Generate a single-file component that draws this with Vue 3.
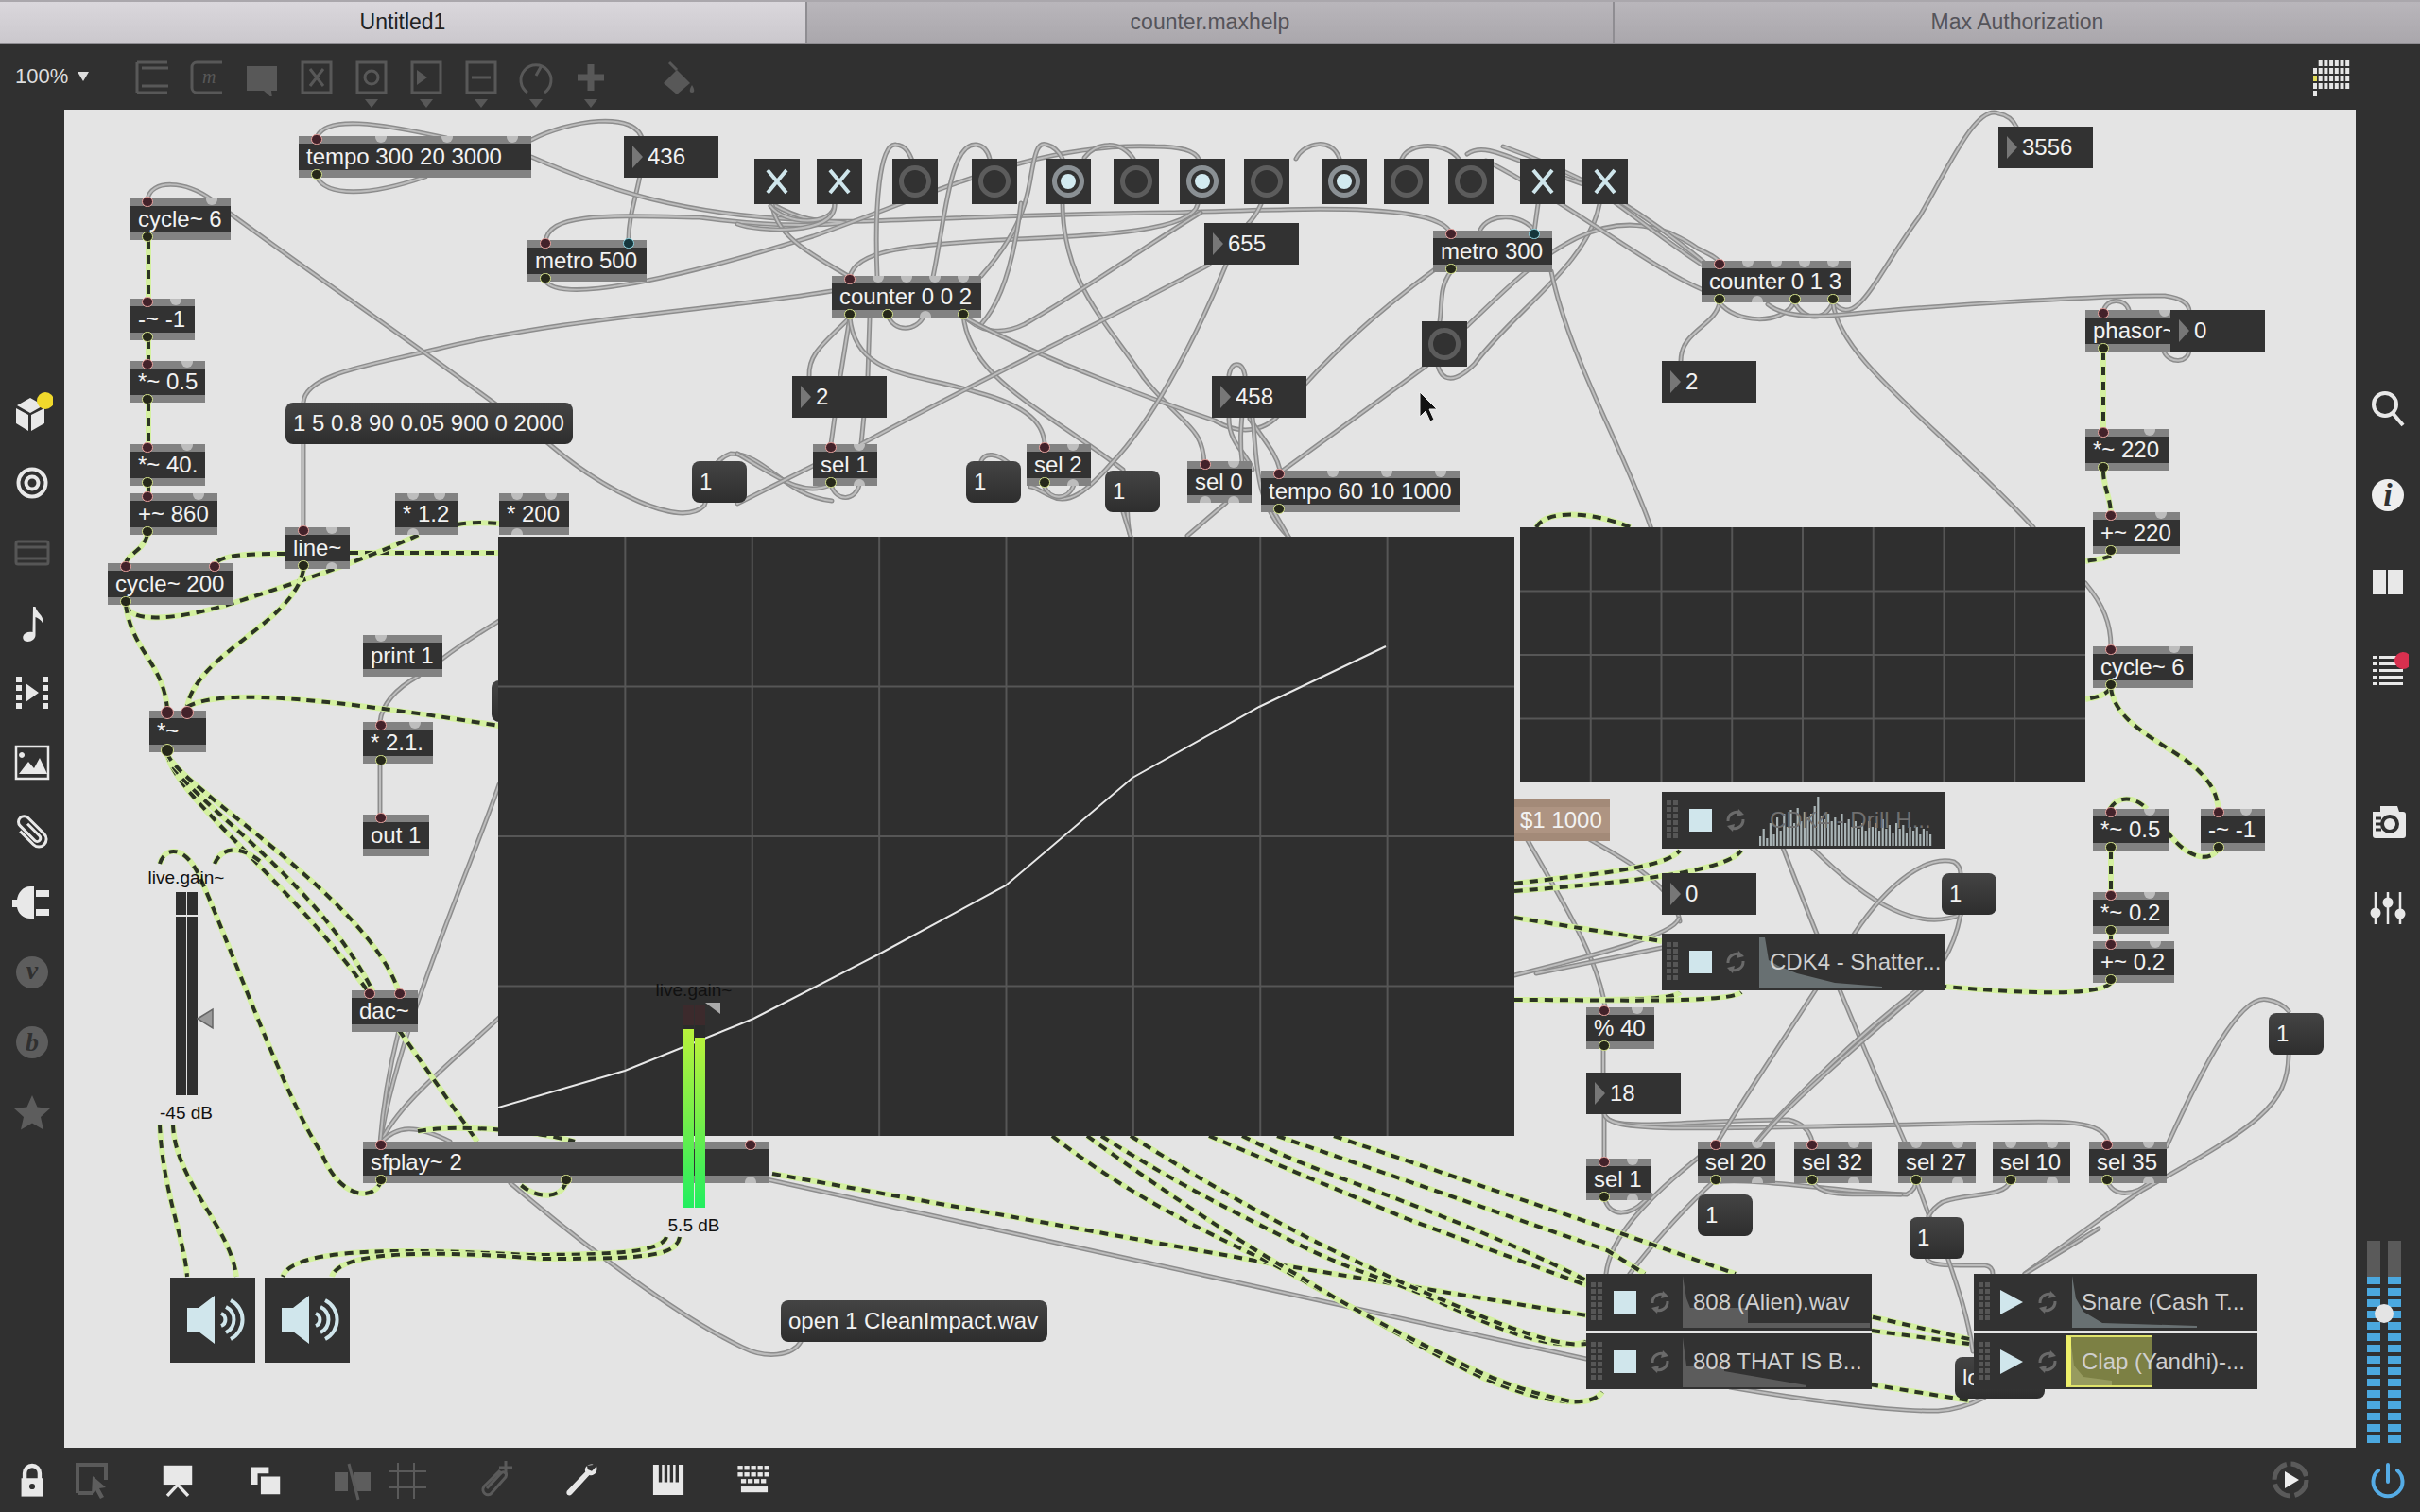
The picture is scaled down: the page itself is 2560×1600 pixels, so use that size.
<script setup>
const o = (t, x, y, w, i = '', u = '') => ({ t, x, y, w, i: ports(i), u: ports(u) })
function ports(s) {
  return s.split(' ').filter(Boolean).map(p => ({ x: parseInt(p), c: /c/.test(p), t: /t/.test(p), b: /b/.test(p) }))
}
const objs = [
  o('tempo 300 20 3000', 316, 144, 246, '19c 87 157 226', '19c'),
  o('cycle~ 6', 138, 210, 106, '18c 86', '18c'),
  o('-~ -1', 138, 316, 68, '18c 48', '18c'),
  o('*~ 0.5', 138, 382, 79, '18c 60', '18c'),
  o('*~ 40.', 138, 470, 79, '18c 60', '18c'),
  o('+~ 860', 138, 522, 92, '18c 72', '18c'),
  o('metro 500', 558, 254, 126, '19c 107ct', '19c'),
  o('* 1.2', 418, 522, 66, '19 47', '19'),
  o('* 200', 528, 522, 74, '19 55', '19'),
  o('cycle~ 200', 114, 596, 132, '19c 113c', '19c'),
  o('line~', 302, 558, 68, '19c 49', '19c 49'),
  o('print 1', 384, 672, 84, '19', ''),
  o('*~', 158, 752, 60, '19cb 40cb', '19cb'),
  o('* 2.1.', 384, 764, 74, '19c 55', '19c'),
  o('out 1', 384, 862, 70, '19c', ''),
  o('dac~', 372, 1048, 70, '19c 51c', ''),
  o('sfplay~ 2', 384, 1208, 430, '19c 410c', '19c 215c 410'),
  o('counter 0 0 2', 880, 292, 158, '19c 49 79 109 139', '19c 59c 99 139c'),
  o('metro 300', 1516, 244, 126, '19c 107ct', '19c'),
  o('sel 1', 860, 470, 68, '19c 49', '19c 49'),
  o('sel 2', 1086, 470, 68, '19c 49', '19c 49'),
  o('sel 0', 1256, 488, 68, '19c 49', '19 49'),
  o('tempo 60 10 1000', 1334, 498, 210, '19c 76 133 190', '19c'),
  o('counter 0 1 3', 1800, 276, 158, '19c 49 79 109 139', '19c 59 99c 139c'),
  o('phasor~', 2206, 328, 100, '19c 84', '19c'),
  o('*~ 220', 2206, 454, 88, '19c 68', '19c'),
  o('+~ 220', 2214, 542, 92, '19c 72', '19c'),
  o('cycle~ 6', 2214, 684, 106, '19c 86', '19c'),
  o('*~ 0.5', 2214, 856, 80, '19c 60', '19c'),
  o('-~ -1', 2328, 856, 68, '19c 48', '19c'),
  o('*~ 0.2', 2214, 944, 80, '19c 60', '19c'),
  o('+~ 0.2', 2214, 996, 86, '19c 66', '19c'),
  o('% 40', 1678, 1066, 72, '19c 54', '19c'),
  o('sel 1', 1678, 1226, 68, '19c 49', '19c 49'),
  o('sel 20', 1796, 1208, 82, '19c 63', '19c 63'),
  o('sel 32', 1898, 1208, 82, '19c 63', '19c 63'),
  o('sel 27', 2008, 1208, 82, '19 63', '19c 63'),
  o('sel 10', 2108, 1208, 82, '19 63', '19c 63'),
  o('sel 35', 2210, 1208, 82, '19c 63', '19c 63'),
]
const nums = [
  ['436', 660, 144], ['655', 1274, 236], ['2', 838, 398], ['458', 1282, 398], ['3556', 2114, 134],
  ['2', 1758, 382], ['0', 2296, 328], ['0', 1758, 924], ['18', 1678, 1135],
].map(([t, x, y]) => ({ t, x, y }))
const msgs = [
  ['1 5 0.8 90 0.05 900 0 2000', 302, 426, 304], ['1', 732, 488, 58], ['', 520, 720, 30], ['1', 1022, 488, 58],
  ['1', 1169, 498, 58], ['1', 2054, 924, 58], ['1', 1796, 1264, 58], ['1', 2020, 1288, 58], ['1', 2400, 1072, 58],
  ['open 1 CleanImpact.wav', 826, 1376, 282], ['lo', 2068, 1436, 95],
].map(([t, x, y, w]) => ({ t, x, y, w }))
const toggles = [798, 864, 1608, 1674].map(x => ({ x, y: 168 }))
const buttons = [
  [944], [1028], [1106, 1], [1178], [1248, 1], [1316], [1398, 1], [1464], [1532],
].map(([x, on]) => ({ x, y: 168, on })).concat([{ x: 1504, y: 340 }])

const gridLines = (x, y, w, h, cols, rows) => {
  const out = []
  for (let i = 1; i < cols; i++) out.push(`M${x + (w * i) / cols} ${y}V${y + h}`)
  for (let i = 1; i < rows; i++) out.push(`M${x} ${y + (h * i) / rows}H${x + w}`)
  return out.join('')
}
const grid1 = gridLines(0, 0, 1075, 634, 8, 4)
const grid2 = gridLines(0, 0, 598, 270, 8, 4)

const spikes = [10, 18, 8, 24, 12, 30, 16, 34, 20, 38, 24, 40, 26, 36, 30, 34, 42, 52, 32, 28, 34, 26, 30, 22, 34, 24, 28, 20, 26, 18, 24, 16, 26, 20, 24, 16, 28, 18, 22, 14, 24, 18, 22, 14, 20, 16, 20, 12, 18, 16, 12]
const drill = spikes.map((h, n) => `M${103 + n * 3.6} 57v-${h}h2.2v${h}Z`).join('')

const plays = [
  { t: 'CDK4 - Drill H...', x: 1758, y: 838, w: 300, h: 60, tx: 114, dim: true, wave: drill, c: '#a9b4b6' },
  { t: 'CDK4 - Shatter...', x: 1758, y: 988, w: 300, h: 60, tx: 114, wave: 'M103 57V4h6l4 24 10 6 20 8 40 10 50 4V57Z', c: '#687072' },
  { t: '808 (Alien).wav', x: 1678, y: 1348, w: 302, h: 60, tx: 113, wave: 'M102 57V2l4 24 4 10H171V52H300V57Z', c: '#5c5c5c' },
  { t: '808 THAT IS B...', x: 1678, y: 1411, w: 302, h: 59, tx: 113, wave: 'M102 57V4l4 30H146V40L233 55V57Z', c: '#5c5c5c' },
  { t: 'Snare (Cash T...', x: 2088, y: 1348, w: 300, h: 60, tx: 114, play: true, wave: 'M104 57V2l4 24 8 14 20 12 100 3V57Z', c: '#687072' },
  { t: 'Clap (Yandhi)-...', x: 2088, y: 1411, w: 300, h: 59, tx: 114, play: true, hl: true, wave: 'M102 57V4l4 30 10 12 30 4V57Z', c: '#636363' },
]
const dots = [0, 1, 2, 3, 4, 5]

const gray = [
  'M335 145C345 122 400 130 472 146', 'M335 187C345 208 390 208 450 187',
  'M562 148C600 128 675 115 680 150C682 190 664 220 665 256', 'M562 166C640 200 720 228 860 233C900 238 1000 228 1239 225C1400 220 1520 215 1535 247',
  'M577 256C580 225 640 228 740 230C800 238 850 240 895 236C880 232 860 240 817 216', 'M577 297C590 320 700 300 860 250C1000 200 1100 150 1222 155C1250 155 1264 160 1268 168',
  'M321 426C322 395 400 385 455 371C600 335 760 328 880 308', 'M156 211C160 190 195 190 225 212C300 270 450 370 581 470C640 520 720 560 745 535C752 520 745 490 773 480C810 480 830 525 880 530',
  'M817 216C820 250 860 270 899 293', 'M899 293C905 265 960 260 1040 255C1120 250 1260 250 1267 216', 'M883 216C882 240 830 238 815 218',
  'M883 216C885 250 800 245 780 237', 'M928 293C925 220 930 150 948 153C958 154 962 162 965 170', 'M987 293C1000 230 1005 150 1033 153C1040 154 1045 160 1047 168',
  'M1038 292C1075 250 1085 220 1090 190C1095 160 1098 150 1107 153C1115 155 1120 160 1124 168', 'M1038 343C1050 330 1070 300 1080 215', 'M1147 167C1160 150 1185 148 1199 168',
  'M1124 216C1125 300 1170 340 1210 400C1250 450 1272 450 1274 490', 'M899 336C870 365 855 375 856 398', 'M899 336L889 398L879 470', 'M920 336L918 398L911 470',
  'M899 336C905 400 970 395 1033 415C1090 430 1105 450 1105 472', 'M939 333C945 352 970 352 978 333', 'M1019 333C1025 400 1100 430 1188 497C1195 520 1190 550 1196 568',
  'M1019 333C1035 352 1060 355 1084 343C1150 305 1220 255 1270 225', 'M1019 335C1100 380 1240 430 1285 445C1310 460 1340 460 1360 430C1410 370 1470 320 1518 285',
  'M1279 280C1150 350 1033 403 911 470', 'M1297 280C1260 370 1215 450 1176 490C1150 520 1130 535 1112 525C1100 520 1095 515 1090 515',
  'M1535 287C1522 305 1526 320 1523 340', 'M1566 243C1575 225 1610 225 1624 245', 'M1627 216L1623 245', 'M1692 216C1680 280 1600 330 1560 385C1540 405 1526 405 1521 387',
  'M1552 345C1620 280 1700 195 1796 263C1810 270 1815 272 1819 277', 'M1354 500L1509 387', 'M1641 287C1660 380 1720 480 1747 560', 'M1590 155C1661 180 1720 210 1802 277',
  'M1572 170C1660 215 1740 280 1802 307', 'M1819 320C1815 345 1778 350 1778 382', 'M1819 320C1835 342 1885 345 1898 320', 'M1898 320C1910 340 1930 340 1939 320',
  'M1939 320C1965 350 1985 290 2030 230C2060 180 2090 110 2114 120C2125 122 2130 128 2133 134', 'M1939 320C1945 380 2050 450 2151 558',
  'M1870 322C1890 338 1930 335 1960 332C2060 322 2240 312 2290 313C2305 315 2316 320 2316 330', 'M2225 330C2228 315 2248 315 2252 328', 'M2289 372C2295 385 2315 385 2316 370',
  'M1300 443C1300 470 1320 480 1325 497', 'M1322 443C1340 470 1350 480 1354 497', 'M1300 397C1303 382 1314 382 1317 397C1315 440 1310 460 1314 488', 'M1325 442C1330 480 1325 530 1363 568',
  'M1371 168C1380 150 1410 145 1417 168', 'M1483 168C1490 150 1530 150 1543 168', 'M1552 163C1570 150 1590 165 1680 197C1700 205 1740 240 1800 280', 'M1334 216C1330 225 1325 232 1320 237',
  'M879 513C885 532 905 530 909 513', 'M879 513C850 525 830 510 780 480', 'M780 533L866 490', 'M1104 513C1110 530 1130 530 1136 513', 'M1038 488C1042 478 1055 480 1067 490', 'M1188 542L1196 568', 'M1297 532L1256 567', 'M1348 542L1363 568',
  'M468 697C490 680 510 668 528 657', 'M443 715C420 728 404 745 402 764', 'M402 806V862', 'M321 470V558', 'M528 830C505 900 420 1090 402 1210', 'M528 1077C470 1130 420 1170 402 1210',
  'M402 1210C420 1190 440 1190 476 1208', 'M540 1252C620 1320 720 1395 786 1426C810 1438 838 1435 847 1420', 'M422 1090C412 1130 405 1170 402 1210', 'M811 1248L1678 1438',
  'M1696 1106V1135', 'M1697 1178V1226', 'M1697 1178C1700 1200 1780 1185 1892 1185C1905 1188 1914 1195 1917 1208', 'M1697 1178C1700 1200 1780 1195 2111 1188C2180 1186 2225 1185 2230 1208',
  'M1605 870C1650 950 1690 1010 1698 1066', 'M1642 866C1700 900 1770 930 1777 975', 'M1602 1032C1690 1010 1770 990 1776 972', 'M1886 897C1920 985 1950 1060 2017 1213',
  'M1917 897C1980 960 2030 985 2074 968', 'M1961 989C2000 930 2040 905 2067 912C2072 915 2074 920 2074 925', 'M2074 968C2065 1015 2040 1040 2025 1050C1960 1100 1890 1170 1858 1208', 'M1921 1047C1880 1110 1840 1170 1817 1208', 'M2033 1047C1960 1110 1890 1170 1860 1208',
  'M1699 1348C1703 1310 1740 1270 1799 1223', 'M1814 1249C1780 1280 1745 1320 1724 1348', 'M1697 1267C1702 1288 1725 1290 1746 1264', 'M1814 1251C1850 1245 1950 1262 2017 1264C2025 1260 2027 1255 2027 1249',
  'M1917 1249C1925 1270 1970 1262 2011 1264', 'M2027 1249L2042 1290', 'M2127 1249C2122 1268 2080 1262 2055 1272C2048 1276 2044 1280 2040 1287', 'M2229 1249C2235 1268 2260 1265 2274 1251',
  'M2292 1213C2330 1130 2370 1050 2399 1058C2410 1060 2416 1064 2421 1070', 'M2421 1116C2420 1170 2390 1190 2267 1259C2220 1290 2180 1320 2142 1348', 'M2038 1331C2040 1340 2060 1339 2100 1339C2106 1340 2108 1344 2108 1348', 'M2060 1330C2072 1365 2082 1395 2087 1430',
  'M1830 1468C1900 1480 2000 1494 2050 1493C2070 1492 2085 1486 2099 1479', 'M1625 1030L1758 1003', 'M2220 1300L2142 1348', 'M2206 617C2225 640 2233 660 2233 684',
]
const sig = [
  'M157 254V316', 'M157 360V382', 'M157 426V470', 'M157 514V522', 'M156 566C150 585 135 585 133 597', 'M302 586C270 586 235 586 227 597', 'M484 555C500 552 515 553 528 554', 'M370 585H528',
  'M133 640C140 665 210 650 250 637C320 615 390 590 443 566', 'M133 640C140 690 172 700 177 750', 'M321 603C310 660 210 690 198 747', 'M198 748C230 730 320 735 528 768',
  'M177 797C182 840 300 925 390 1050', 'M177 797C180 835 330 920 395 1050', 'M177 797C185 830 390 950 422 1050',
  'M169 914C175 895 195 895 210 925C240 990 300 1160 340 1220C360 1270 395 1270 402 1252', 'M227 914C235 895 255 895 276 912', 'M169 1190C172 1260 195 1310 198 1351', 'M183 1190C185 1250 245 1300 250 1351',
  'M705 1309C700 1325 650 1328 560 1328C440 1322 310 1318 299 1351', 'M719 1309C715 1330 680 1332 574 1332C480 1325 360 1320 351 1351', 'M599 1250C595 1268 570 1270 551 1254',
  'M422 1090L505 1208', 'M442 1197C480 1190 560 1195 608 1208',
  'M817 1242L1345 1337L1678 1392', 'M1678 1392C1800 1385 1900 1375 1978 1393L2083 1417', 'M1980 1408L2083 1422', 'M1978 1465L2083 1482',
  'M1113 1202C1200 1270 1290 1310 1345 1337C1400 1365 1490 1420 1546 1447C1610 1480 1680 1495 1695 1473', 'M1150 1202C1230 1260 1320 1320 1374 1350C1440 1392 1500 1420 1546 1443C1600 1470 1640 1478 1661 1483',
  'M1165 1202C1240 1250 1310 1285 1374 1317C1430 1345 1470 1355 1506 1370C1570 1400 1640 1432 1678 1420', 'M1196 1202C1280 1255 1370 1305 1431 1333L1489 1360C1550 1385 1640 1428 1678 1422',
  'M1279 1202L1489 1290L1678 1360', 'M1314 1202C1380 1235 1430 1250 1489 1273C1560 1300 1630 1330 1678 1355', 'M1351 1202L1700 1323L1740 1348', 'M1411 1202L1700 1300L1836 1348',
  'M2225 372V454', 'M2225 498C2225 515 2232 525 2233 542', 'M2233 588C2225 592 2215 592 2206 594', 'M2233 728C2225 738 2215 738 2206 740', 'M2233 728C2238 770 2300 790 2325 815C2340 830 2345 840 2347 857', 'M2232 856C2240 842 2258 842 2271 856', 'M2292 879C2310 905 2335 915 2346 899', 'M2233 900V944', 'M2233 988V996',
  'M2233 1040C2225 1050 2180 1055 2058 1044', 'M1602 935C1680 925 1760 920 1777 900', 'M1602 943C1700 935 1825 925 1842 900', 'M1602 971L1758 996', 'M1602 1058C1680 1058 1770 1060 1777 1050', 'M1602 1058C1700 1058 1830 1062 1842 1050', 'M1625 558C1635 540 1680 540 1725 558',
]
const curve = 'M0 604L134 565L270 510L404 441L537 369L671 255L805 180L939 116'
const meterSegs = Array.from({ length: 15 }, (_, i) => i)
const keyBars = []
for (let r = 0; r < 5; r++) {
  for (let c = 0; c < 7; c++) {
    if (r === 0 && c === 0) continue
    if (r === 4 && c > 0) continue
    keyBars.push({ k: r * 10 + c, x: c * 5.7, y: r * 8, on: r === 2 && c === 0 })
  }
}
</script>

<template>
  <div class="app">
    <div class="tabs">
      <div class="tab on">Untitled1</div>
      <div class="tab">counter.maxhelp</div>
      <div class="tab">Max Authorization</div>
    </div>
    <div class="toolbar">
      <div class="zoom">100%<span class="ztri"></span></div>
      <div class="tb">
        <svg viewBox="0 0 40 40"><path d="M4 4v32M4 4h32M9 10h28M9 29h28M4 36h32" /></svg>
      </div>
      <div class="tb">
        <svg viewBox="0 0 40 40"><path d="M36 4H9a5 5 0 0 0-5 5v22a5 5 0 0 0 5 5h27" /><text x="15" y="26" class="tm">m</text></svg>
      </div>
      <div class="tb">
        <svg viewBox="0 0 40 40"><path class="fl" d="M4 8h32v26h-6l1 8-9-8H4Z" /></svg>
      </div>
      <div class="tb">
        <svg viewBox="0 0 40 40"><path d="M5 4h30v32H5ZM13 11l14 18M27 11L13 29" /></svg>
      </div>
      <div class="tb">
        <svg viewBox="0 0 40 40"><path d="M5 4h30v32H5Z" /><circle cx="20" cy="20" r="7" /></svg><i class="dtri"></i>
      </div>
      <div class="tb">
        <svg viewBox="0 0 40 40"><path d="M5 4h30v32H5Z" /><path class="fl" d="M10 12l11 8-11 8Z" /></svg><i class="dtri"></i>
      </div>
      <div class="tb">
        <svg viewBox="0 0 40 40"><path d="M5 4h30v32H5ZM10 20h20" /></svg><i class="dtri"></i>
      </div>
      <div class="tb">
        <svg viewBox="0 0 40 40"><path d="M11 36a16 16 0 1 1 18 0M20 18l5-9" /></svg><i class="dtri"></i>
      </div>
      <div class="tb">
        <svg viewBox="0 0 40 40"><path class="plus" d="M20 6v28M6 20h28" /></svg><i class="dtri"></i>
      </div>
      <div class="tb paint">
        <svg viewBox="0 0 40 40"><path class="fl" d="M20 12l14 14-14 12L6 26Z" /><path d="M12 4l8 8" /><path class="fl" d="M36 28c3 5 3 8 0 8s-3-3 0-8Z" /></svg>
      </div>
      <svg class="keys" viewBox="0 0 40 38"><rect v-for="b in keyBars" :key="b.k" :x="b.x" :y="b.y" width="4" height="6" :class="b.on ? 'kon' : 'koff'" /></svg>
    </div>

    <div class="mid">
      <aside class="side left">
        <svg viewBox="0 0 44 44"><path class="w" d="M20 6l14 8-14 8-14-8ZM5 17l13 7v17L5 33ZM35 17l-14 7v17l14-8Z" /><circle cx="36" cy="9" r="9" fill="#f0d92c" /></svg>
        <svg viewBox="0 0 44 44"><circle class="ws" cx="22" cy="22" r="14.5" /><circle class="ws" cx="22" cy="22" r="6.5" /></svg>
        <svg viewBox="0 0 44 44"><path class="ds" d="M7 10h30a2 2 0 0 1 2 2v20a2 2 0 0 1-2 2H7a2 2 0 0 1-2-2V12a2 2 0 0 1 2-2ZM5 16h34M5 28h34" /></svg>
        <svg viewBox="0 0 44 44"><path class="w" d="M23 5l2.500 0c1 7 9 8 8 18-2-4-5-6-8-7v19c0 4-4 7-8 7s-6-3-5-6 5-5 10-4Z" /></svg>
        <svg viewBox="0 0 44 44"><path class="w" d="M5 5h6v6H5ZM5 14h6v6H5ZM5 24h6v6H5ZM5 33h6v6H5ZM33 5h6v6h-6ZM33 14h6v6h-6ZM33 24h6v6h-6ZM33 33h6v6h-6ZM15 12l14 10-14 10Z" /></svg>
        <svg viewBox="0 0 44 44"><path class="ws thin" d="M5 5h34v34H5Z" /><path class="w" d="M8 34l10-13 6 7 6-11 8 17ZM11 11a3 3 0 1 0 .1 0Z" /></svg>
        <svg viewBox="0 0 44 44"><path class="ws clip" d="M14 12v20a8 8 0 0 0 16 0V8a6 6 0 0 0-12 0v22a3.500 3.500 0 0 0 7 0V12" transform="rotate(-45 22 22)" /></svg>
        <svg viewBox="0 0 44 44"><path class="w" d="M20 5h4v34h-4c-8 0-13-6-14-12H1v-8h5c1-7 6-14 14-14ZM26 9h14v7H26ZM26 29h14v7H26Z" /></svg>
        <svg viewBox="0 0 44 44"><circle cx="22" cy="22" r="17" fill="#5d5d5d" /><text class="ser" x="22" y="29" text-anchor="middle">v</text></svg>
        <svg viewBox="0 0 44 44"><circle cx="22" cy="22" r="17" fill="#5d5d5d" /><text class="ser" x="22" y="31" text-anchor="middle">b</text></svg>
        <svg viewBox="0 0 44 44"><path fill="#5d5d5d" d="M22 4l5.500 12.500 13.500 1.500-10 9 3 13.500-12-7-12 7 3-13.500-10-9 13.500-1.500Z" /></svg>
      </aside>

      <main class="canvas">
        <svg class="cords" viewBox="68 116 2424 1416" width="2424" height="1416">
          <g v-for="(d, n) in gray" :key="'g' + n">
            <path class="g1" :d="d" /><path class="g2" :d="d" />
          </g>
          <g v-for="(d, n) in sig" :key="'s' + n">
            <path class="s1" :d="d" /><path class="s2" :d="d" />
          </g>
        </svg>

        <div v-for="(b, n) in objs" :key="'o' + n" class="node" :style="{ left: b.x - 68 + 'px', top: b.y - 116 + 'px', width: b.w + 'px' }">
          <div class="obj">{{ b.t }}</div>
          <i v-for="(p, k) in b.i" :key="k" class="pin in" :class="{ c: p.c, t: p.t, b: p.b }" :style="{ left: p.x + 'px' }"></i>
          <i v-for="(p, k) in b.u" :key="'u' + k" class="pin out" :class="{ c: p.c, b: p.b }" :style="{ left: p.x + 'px' }"></i>
        </div>
        <div v-for="(m, n) in msgs" :key="'m' + n" class="msg" :style="{ left: m.x - 68 + 'px', top: m.y - 116 + 'px', width: m.w + 'px' }">{{ m.t }}</div>
        <div class="msg tan">$1 1000</div>

        <div class="graph big">
          <svg viewBox="0 0 1075 634" width="1075" height="634"><path class="gl" :d="grid1" /><path class="curve" :d="curve" /></svg>
        </div>
        <div class="graph small">
          <svg viewBox="0 0 598 270" width="598" height="270"><path class="gl" :d="grid2" /></svg>
        </div>

        <div v-for="(m, n) in nums" :key="'n' + n" class="num" :style="{ left: m.x - 68 + 'px', top: m.y - 116 + 'px' }">{{ m.t }}</div>

        <div v-for="(t, n) in toggles" :key="'t' + n" class="sq" :style="{ left: t.x - 68 + 'px', top: t.y - 116 + 'px' }">
          <svg viewBox="0 0 48 48"><path class="x" d="M14 12l20 24M34 12L14 36" /></svg>
        </div>
        <div v-for="(b, n) in buttons" :key="'b' + n" class="sq" :style="{ left: b.x - 68 + 'px', top: b.y - 116 + 'px' }">
          <svg viewBox="0 0 48 48"><circle class="ring" :class="{ on: b.on }" cx="24" cy="24" r="14.5" /><circle v-if="b.on" cx="24" cy="24" r="8" fill="#d2eaf0" /></svg>
        </div>

        <div class="lg lg1">
          <span class="lgt">live.gain~</span>
          <div class="bars"><b></b><b></b></div>
          <span class="lgt bot">-45 dB</span>
          <svg class="hand" viewBox="0 0 18 24"><path d="M1 12L17 2v20Z" /></svg>
        </div>
        <div class="lg lg2">
          <span class="lgt">live.gain~</span>
          <div class="bars hot"><b class="l"></b><b class="r"></b></div>
          <span class="lgt bot">5.5 dB</span>
          <svg class="flag" viewBox="0 0 16 12"><path d="M0 0h16v12Z" /></svg>
        </div>

        <div class="spk s1p"><svg viewBox="0 0 90 90"><path class="sp" d="M18 32h12l17-13v51L30 57H18Z" /><path class="sa" d="M54 38a7 7 0 0 1 0 13M59 31a15 15 0 0 1 0 27M64 24a23 23 0 0 1 0 41" /></svg></div>
        <div class="spk s2p"><svg viewBox="0 0 90 90"><path class="sp" d="M18 32h12l17-13v51L30 57H18Z" /><path class="sa" d="M54 38a7 7 0 0 1 0 13M59 31a15 15 0 0 1 0 27M64 24a23 23 0 0 1 0 41" /></svg></div>

        <div v-for="(p, n) in plays" :key="'p' + n" class="play" :style="{ left: p.x - 68 + 'px', top: p.y - 116 + 'px', width: p.w + 'px', height: p.h + 'px' }">
          <svg class="wave" :viewBox="`0 0 ${p.w} 60`" :width="p.w" height="60"><path :d="p.wave" :fill="p.c" /></svg>
          <div v-if="p.hl" class="hl"></div>
          <div class="grip"><i v-for="d in dots" :key="d"></i><i v-for="d in dots" :key="'z' + d"></i></div>
          <svg v-if="p.play" class="ctl" viewBox="0 0 24 28"><path fill="#d0e6ec" d="M0 1l24 13L0 27Z" /></svg>
          <div v-else class="stop"></div>
          <svg class="loop" viewBox="0 0 24 28"><path d="M4 15a9 9 0 0 1 14-8M20 13a9 9 0 0 1-14 8" /><path class="lf" d="M15 2l6 6-8 2ZM9 26l-6-6 8-2Z" /></svg>
          <span class="ptx" :class="{ dim: p.dim }" :style="{ left: p.tx + 'px' }">{{ p.t }}</span>
        </div>

        <svg class="cursor" viewBox="0 0 20 34"><path d="M1 1v26l6-6 5 11 4-2-5-11h8Z" fill="#111" stroke="#eee" stroke-width="1" /></svg>
      </main>

      <aside class="side right">
        <svg viewBox="0 0 44 44"><circle class="ws" cx="19" cy="18" r="12" /><path class="ws" d="M27 27l11 13" /></svg>
        <svg viewBox="0 0 44 44"><circle cx="22" cy="22" r="17" fill="#eee" /><text class="seri" x="22" y="33" text-anchor="middle">i</text></svg>
        <svg viewBox="0 0 44 44"><path class="w" d="M6 9h14v26H6ZM22 9h16v26H22Z" /></svg>
        <svg viewBox="0 0 44 44"><path class="w" d="M6 8h4v3H6ZM13 8h25v3H13ZM6 15h4v3H6ZM13 15h25v3H13ZM6 22h4v3H6ZM13 22h25v3H13ZM6 29h4v3H6ZM13 29h25v3H13ZM6 36h4v3H6ZM13 36h25v3H13Z" /><circle cx="38" cy="13" r="9" fill="#d8304f" /></svg>
        <svg class="cam" viewBox="0 0 44 44"><path class="w" d="M6 12h8V6h18l2 6h4a3 3 0 0 1 3 3v22a3 3 0 0 1-3 3H9a3 3 0 0 1-3-3Z" /><circle cx="24" cy="25" r="8" fill="none" stroke="#303030" stroke-width="4" /><path d="M9 19h6M9 25h6M9 31h6" stroke="#303030" stroke-width="3" /></svg>
        <svg viewBox="0 0 44 44"><path class="ws thin" d="M9 5v34M22 5v34M35 5v34" /><circle cx="9" cy="27" r="5.500" class="w" /><circle cx="22" cy="16" r="5.500" class="w" /><circle cx="35" cy="28" r="5.500" class="w" /></svg>
        <div class="meter">
          <div class="mb"><i v-for="s in meterSegs" :key="s"></i></div>
          <div class="mb"><i v-for="s in meterSegs" :key="s"></i></div>
          <span class="knob"></span>
        </div>
      </aside>
    </div>

    <div class="bottom">
      <svg viewBox="-3 -3 50 50"><path class="ws wide" d="M13 21v-7a9 9 0 0 1 18 0v7" /><path class="w" d="M9 20h26v22H9Z" /><circle cx="22" cy="30" r="3.500" fill="#303030" /></svg>
      <svg class="m20" viewBox="0 0 44 44"><path class="d4" d="M6 36V6h30v16M6 36h16" /><path fill="#5d5d5d" d="M22 18l14 12-7 1 5 9-4 2-5-9-4 5Z" /></svg>
      <svg class="m46" viewBox="-4 -4 52 52"><path class="w" d="M4 4h36v24H4Z" /><path class="ws" d="M22 28L9 42M22 28l13 14" /></svg>
      <svg class="m49" viewBox="-4 -4 52 52"><path class="w" d="M4 6h22v8H12v14H4ZM16 18h24v22H16Z" /></svg>
      <svg class="m48" viewBox="0 0 44 44"><path fill="#5d5d5d" d="M3 14h14v20H3ZM24 14h17v20H24Z" /><path class="d3" d="M18 5l10 38" /></svg>
      <svg class="m14" viewBox="0 0 44 44"><path class="d2" d="M12 4v38M29 4v38M2 13h40M2 30h40" /></svg>
      <svg class="m48" viewBox="0 0 44 44"><path class="d3" d="M28 12L11 29c-4 6 4 12 8 7l15-17c2-5-3-7-6-3L14 31" /><path class="d3" d="M34 2v14M27 9h14" /></svg>
      <svg class="m48" viewBox="-4 -4 52 52"><path class="w" d="M37 3c-6-2-12 3-10 9L4 36c-2 5 3 7 6 4l22-24c6 2 11-4 9-11l-6 6-5-2-1-5Z" /></svg>
      <svg class="m48" viewBox="-4 -4 52 52"><path class="w" d="M3 3h7v22h4V3h3v22h4V3h3v22h4V3h3v22h4V3h6v38H3Z" /></svg>
      <svg class="m47" viewBox="-3 -3 50 50"><g class="kg2"><rect v-for="n in 5" :key="'a' + n" :x="n * 8 - 6" y="5" width="6" height="5" /><rect v-for="n in 5" :key="'b' + n" :x="n * 8 - 6" y="13" width="6" height="5" /><rect v-for="n in 4" :key="'c' + n" :x="n * 8 - 2" y="21" width="6" height="5" /><rect x="6" y="30" width="32" height="7" /></g></svg>
      <svg class="trans" viewBox="0 0 44 44"><circle cx="22" cy="22" r="17" fill="none" stroke="#5a5a5a" stroke-width="5" stroke-dasharray="22 4.700" /><path fill="#eee" d="M16 13l15 9-15 9Z" /></svg>
      <svg class="pow" viewBox="0 0 44 44"><path d="M22 6v18M12 12a15.500 15.500 0 1 0 20 0" fill="none" stroke="#55ace6" stroke-width="4" stroke-linecap="round" /></svg>
    </div>
  </div>
</template>

<style scoped>
.app { width: 2560px; height: 1600px; display: flex; flex-direction: column; background: #303030; overflow: hidden; font-family: "Liberation Sans", Arial, sans-serif; }
.tabs { display: flex; height: 47px; flex: none; border-top: 2px solid #aaa7ac; box-sizing: border-box; border-bottom: 2px solid #8f8d92; }
.tab { flex: 1; display: flex; align-items: center; justify-content: center; font-size: 23px; color: #55545a; background: linear-gradient(#b9b6bb, #aaa7ac); border-left: 2px solid #8f8d92; }
.tab.on { color: #222; background: linear-gradient(#dad7dc, #cbc8cd); border-left: none; }
.toolbar { height: 69px; flex: none; display: flex; align-items: flex-start; }
.zoom { width: 132px; flex: none; box-sizing: border-box; padding: 21px 0 0 16px; color: #ddd; font-size: 22px; display: flex; align-items: center; height: 46px; }
.ztri { width: 0; height: 0; border: 6px solid transparent; border-top: 10px solid #ddd; border-bottom: 0; margin-left: 10px; }
.tb { width: 58px; display: flex; flex-direction: column; align-items: center; padding-top: 15px; flex: none; }
.tb svg { width: 40px; height: 40px; fill: none; stroke: #585858; stroke-width: 3; }
.tb .fl { fill: #585858; stroke: none; }
.tb .plus { stroke-width: 7; }
.tm { font: italic 20px "Liberation Serif", serif; fill: #585858; stroke: none; }
.dtri { width: 0; height: 0; border: 7px solid transparent; border-top: 9px solid #585858; border-bottom: 0; margin-top: 3px; }
.paint { margin-left: 33px; }
.keys { width: 40px; height: 38px; margin: 17px 73px 0 auto; flex: none; }
.koff { fill: #e6e6e6; }
.kon { fill: #e3dc58; }
.mid { flex: 1; display: flex; min-height: 0; }
.side { width: 68px; flex: none; display: flex; flex-direction: column; align-items: center; position: relative; }
.side.left { padding-top: 299px; gap: 30px; }
.side.right { padding-top: 294px; gap: 48px; }
.side > svg { width: 44px; height: 44px; flex: none; }
.cam { margin-top: 69px; }
.w { fill: #e8e8e8; }
.ws { fill: none; stroke: #e8e8e8; stroke-width: 4; }
.ws.thin { stroke-width: 2.5; }
.ws.wide { stroke-width: 5; }
.ws.clip { stroke-width: 3; }
.ds { fill: none; stroke: #565656; stroke-width: 3; }
.ser { font: italic bold 28px "Liberation Serif", serif; fill: #303030; }
.seri { font: italic bold 34px "Liberation Serif", serif; fill: #303030; }
.canvas { flex: 1; position: relative; background: #e4e4e4; overflow: hidden; }
.cords { position: absolute; left: 0; top: 0; }
.cords path { fill: none; stroke-linecap: round; }
.g1 { stroke: #8d8d8d; stroke-width: 5; }
.g2 { stroke: #bdbdbd; stroke-width: 2; }
.s1 { stroke: #d4f0a0; stroke-width: 6; stroke-linecap: butt !important; }
.s2 { stroke: #2c3424; stroke-width: 4; stroke-dasharray: 9 7; stroke-linecap: butt !important; }
.node { position: absolute; height: 44px; }
.obj { height: 44px; box-sizing: border-box; border-top: 8px solid #828282; border-bottom: 8px solid #828282; background: #323232; color: #f2f2f2; font-size: 24px; line-height: 27px; padding-left: 8px; white-space: nowrap; overflow: hidden; }
.pin { position: absolute; width: 12px; margin-left: -6px; box-sizing: border-box; }
.pin.in { top: 0; height: 7px; background: #bdbdbd; border-radius: 0 0 7px 7px; }
.pin.out { bottom: 0; height: 7px; background: #bdbdbd; border-radius: 7px 7px 0 0; }
.pin.c { height: 11px; border-radius: 6px; }
.pin.in.c { background: #43222a; border: 1.500px solid #eba5a0; top: -2px; }
.pin.out.c { background: #26281a; border: 1.500px solid #d8e68c; bottom: -2px; }
.pin.in.t { background: #15363c; border-color: #8fd4e0; }
.pin.b { width: 14px; height: 14px !important; margin-left: -7px; border-radius: 7px; }
.pin.in.b { top: -5px; }
.pin.out.b { bottom: -5px; }
.msg { position: absolute; height: 44px; box-sizing: border-box; border-radius: 8px; background: linear-gradient(#444, #2e2e2e); color: #f2f2f2; font-size: 24px; line-height: 44px; padding-left: 8px; white-space: nowrap; overflow: hidden; }
.tan { left: 1532px; top: 730px; width: 103px; border-radius: 0; background: linear-gradient(#a38a78 0 8px, #ae9482 8px 36px, #a38a78 36px); }
.num { position: absolute; width: 100px; height: 44px; background: #323232; color: #f2f2f2; font-size: 24px; line-height: 44px; padding-left: 25px; box-sizing: border-box; }
.num::before { content: ""; position: absolute; left: 9px; top: 10px; border: 12px solid transparent; border-left: 11px solid #777; border-right: 0; }
.graph { position: absolute; background: #2f2f2f; }
.graph svg { display: block; }
.big { left: 459px; top: 452px; width: 1075px; height: 634px; }
.small { left: 1540px; top: 442px; width: 598px; height: 270px; }
.gl { fill: none; stroke: #565656; stroke-width: 2; }
.curve { fill: none; stroke: #e8e8e8; stroke-width: 2; }
.sq { position: absolute; width: 48px; height: 48px; background: #323232; }
.sq svg { display: block; width: 48px; height: 48px; }
.x { fill: none; stroke: #cfe6ec; stroke-width: 4; }
.ring { fill: none; stroke: #5c5c5c; stroke-width: 5; }
.ring.on { stroke: #8a9094; }
.lg { position: absolute; display: flex; flex-direction: column; align-items: center; width: 90px; }
.lg1 { left: 84px; top: 802px; }
.lg2 { left: 621px; top: 921px; }
.lgt { font-size: 19px; line-height: 22px; color: #111; height: 22px; white-space: nowrap; }
.bot { margin-top: 8px; }
.bars { width: 23px; height: 215px; display: flex; justify-content: space-between; margin-top: 4px; position: relative; }
.bars b { width: 11px; height: 100%; background: linear-gradient(#2f2f2f 0 11%, #e4e4e4 11% 12%, #2f2f2f 12%); position: relative; }
.hot b { background: linear-gradient(#3c2a2c 0 10%, #2b2b2b 10%); overflow: hidden; }
.hot b::after { content: ""; position: absolute; left: 0; right: 0; bottom: 0; background: linear-gradient(#b8f23c, #74ee4a 50%, #22ee60); }
.hot .l::after { height: 189px; }
.hot .r::after { height: 180px; }
.hand { position: absolute; width: 18px; height: 24px; left: 56px; top: 148px; fill: #9a9a9a; stroke: #666; stroke-width: 1.500; }
.flag { position: absolute; width: 16px; height: 12px; left: 57px; top: 24px; fill: #aaa; }
.spk { position: absolute; width: 90px; height: 90px; background: #323232; top: 1236px; }
.s1p { left: 112px; }
.s2p { left: 212px; }
.spk svg { display: block; width: 90px; height: 90px; }
.sp { fill: #d0e6ec; }
.sa { fill: none; stroke: #d0e6ec; stroke-width: 4; }
.play { position: absolute; background: #323232; overflow: hidden; }
.wave { position: absolute; left: 0; top: 0; }
.hl { position: absolute; left: 98px; top: 2px; width: 90px; height: 55px; background: rgba(215, 225, 90, .45); border-left: 5px solid #eef06a; border-top: 2px solid #dfe36a; border-bottom: 2px solid #dfe36a; box-sizing: border-box; }
.grip { position: absolute; left: 5px; top: 9px; display: grid; grid-template-columns: repeat(2, 5px); grid-auto-flow: column; grid-template-rows: repeat(6, 5px); gap: 2px 2px; }
.grip i { background: #565656; }
.stop { position: absolute; left: 29px; top: 18px; width: 24px; height: 24px; background: #d0e6ec; }
.ctl { position: absolute; left: 28px; top: 16px; width: 24px; height: 28px; }
.loop { position: absolute; left: 66px; top: 16px; width: 24px; height: 28px; fill: none; stroke: #6a6a6a; stroke-width: 3; }
.loop .lf { fill: #6a6a6a; stroke: none; }
.ptx { position: absolute; top: 0; line-height: 60px; font-size: 24px; color: #cfcfcf; white-space: nowrap; }
.ptx.dim { color: #6f6f6f; }
.cursor { position: absolute; left: 1433px; top: 298px; width: 20px; height: 34px; }
.meter { position: absolute; left: 12px; top: 1197px; display: flex; gap: 8px; }
.mb { width: 14px; height: 214px; background: linear-gradient(#5a5a5a 0 19%, transparent 19%); display: flex; flex-direction: column; justify-content: flex-end; gap: 4px; }
.mb i { height: 8px; background: #4ba8df; flex: none; }
.knob { position: absolute; left: 8px; top: 67px; width: 20px; height: 20px; border-radius: 50%; background: #e4e4e4; }
.bottom { height: 68px; flex: none; display: flex; align-items: center; padding-left: 12px; position: relative; }
.bottom svg { width: 44px; height: 44px; flex: none; }
.d4 { fill: none; stroke: #5a5a5a; stroke-width: 4; }
.d3 { fill: none; stroke: #5a5a5a; stroke-width: 3; }
.d2 { fill: none; stroke: #5a5a5a; stroke-width: 2; }
.kg2 { fill: #e8e8e8; }
.m20 { margin-left: 20px; }
.m46 { margin-left: 46px; }
.m49 { margin-left: 49px; }
.m48 { margin-left: 48px; }
.m14 { margin-left: 14px; }
.m47 { margin-left: 47px; }
.trans { margin-left: auto; margin-right: 59px; }
.pow { margin-right: 12px; }
</style>

<style>
body { margin: 0; }
</style>
